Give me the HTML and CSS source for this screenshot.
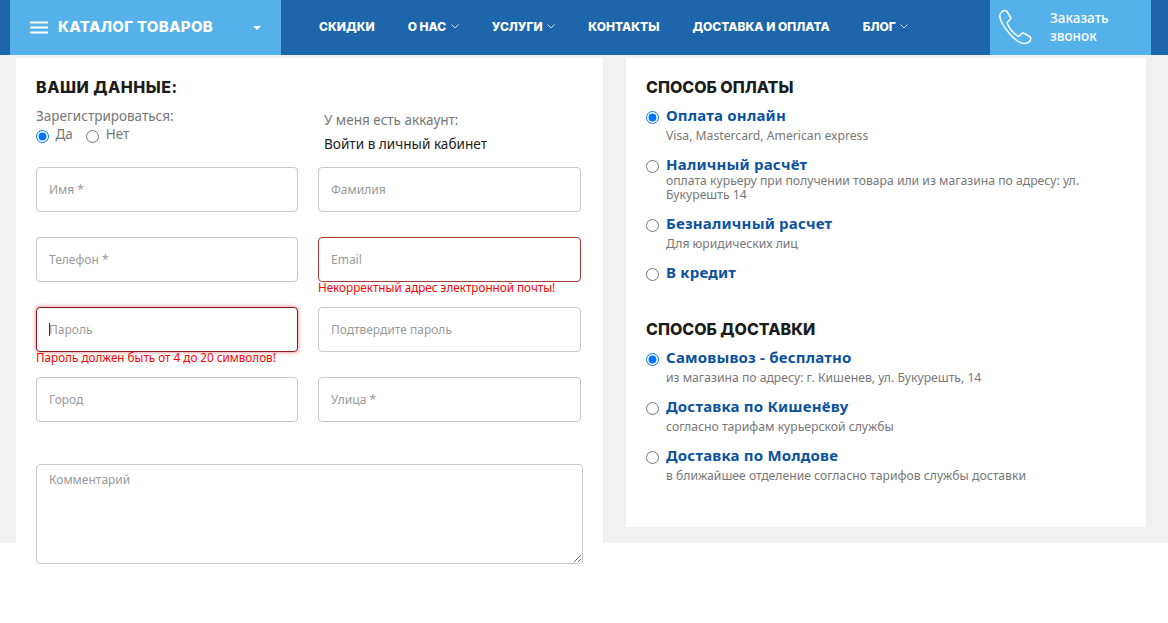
FILE: index.html
```html
<!DOCTYPE html>
<html lang="ru">
<head>
    <meta charset="UTF-8">
    <title>Оформление заказа</title>
    <link rel="stylesheet" href="styles.css">
</head>
<body>
    <div class="header">
        <div class="catalog">
            <svg class="burger" width="18" height="13" viewBox="0 0 18 13"><path d="M0 1.500h18M0 6.500h18M0 11.500h18" stroke="#fff" stroke-width="2"/></svg>
            <span class="catalog-title">Каталог товаров</span>
            <span class="catalog-caret"></span>
        </div>
        <div class="nav-links">
            <a href="#">Скидки</a>
            <a href="#">О нас <svg class="chevron" width="8" height="5" viewBox="0 0 8 5"><path d="M.5.500 4 4 7.500.500" fill="none" stroke="#c9dcee" stroke-width="1"/></svg></a>
            <a href="#">Услуги <svg class="chevron" width="8" height="5" viewBox="0 0 8 5"><path d="M.5.500 4 4 7.500.500" fill="none" stroke="#c9dcee" stroke-width="1"/></svg></a>
            <a href="#">Контакты</a>
            <a href="#">Доставка и оплата</a>
            <a href="#">Блог <svg class="chevron" width="8" height="5" viewBox="0 0 8 5"><path d="M.5.500 4 4 7.500.500" fill="none" stroke="#c9dcee" stroke-width="1"/></svg></a>
        </div>
        <a href="#" class="callback">
            <svg class="phone" width="34" height="35" viewBox="0 0 34 35"><path d="M2 5.500C3 3.500 5 1.500 7 1.500c1 0 1.700.5 2.300 1.500l3 5c.6 1 .4 2-.4 2.800L9.800 12.800c-.6.600-.7 1.300-.3 2.200 2.300 5 5.700 9 10 12 .8.500 1.500.4 2.100-.2l2-2c.9-.8 1.900-.9 2.900-.3l5 3c1 .6 1.500 1.400 1.300 2.400-.3 2-2.500 3.900-5 4.400-3.500.6-7.800-1.300-12.300-5.600C9.500 23 5 16.500 2.800 11.500 2 9 1.500 7 2 5.500Z" fill="none" stroke="#fff" stroke-width="1.500"/></svg>
            <span>Заказать<br>звонок</span>
        </a>
    </div>

    <div class="checkout">
        <div class="card card-form">
            <h2>Ваши данные:</h2>
            <div class="account-row">
                <div class="register">
                    <p class="muted">Зарегистрироваться:</p>
                    <label class="radio-inline"><input type="radio" name="register" checked> Да</label>
                    <label class="radio-inline"><input type="radio" name="register"> Нет</label>
                </div>
                <div class="login">
                    <p class="muted">У меня есть аккаунт:</p>
                    <a href="#">Войти в личный кабинет</a>
                </div>
            </div>
            <div class="form-grid">
                <div class="field"><input type="text" placeholder="Имя *"></div>
                <div class="field"><input type="text" placeholder="Фамилия"></div>
                <div class="field"><input type="text" placeholder="Телефон *"></div>
                <div class="field">
                    <input type="text" class="invalid" placeholder="Email">
                    <p class="error">Некорректный адрес электронной почты!</p>
                </div>
                <div class="field">
                    <input type="password" class="invalid focused" placeholder="Пароль">
                    <span class="caret"></span>
                    <p class="error">Пароль должен быть от 4 до 20 символов!</p>
                </div>
                <div class="field"><input type="password" placeholder="Подтвердите пароль"></div>
                <div class="field"><input type="text" placeholder="Город"></div>
                <div class="field"><input type="text" placeholder="Улица *"></div>
            </div>
            <textarea placeholder="Комментарий"></textarea>
        </div>

        <div class="card card-options">
            <h3>Способ оплаты</h3>
            <label class="option">
                <input type="radio" name="payment" checked>
                <span class="option-title">Оплата онлайн</span>
                <span class="option-text">Visa, Mastercard, American express</span>
            </label>
            <label class="option option-tight">
                <input type="radio" name="payment">
                <span class="option-title">Наличный расчёт</span>
                <span class="option-text">оплата курьеру при получении товара или из магазина по адресу: ул. Букурешть 14</span>
            </label>
            <label class="option">
                <input type="radio" name="payment">
                <span class="option-title">Безналичный расчет</span>
                <span class="option-text">Для юридических лиц</span>
            </label>
            <label class="option">
                <input type="radio" name="payment">
                <span class="option-title">В кредит</span>
            </label>

            <h3 class="delivery-title">Способ доставки</h3>
            <label class="option">
                <input type="radio" name="delivery" checked>
                <span class="option-title">Самовывоз - бесплатно</span>
                <span class="option-text">из магазина по адресу: г. Кишенев, ул. Букурешть, 14</span>
            </label>
            <label class="option">
                <input type="radio" name="delivery">
                <span class="option-title">Доставка по Кишенёву</span>
                <span class="option-text">согласно тарифам курьерской службы</span>
            </label>
            <label class="option">
                <input type="radio" name="delivery">
                <span class="option-title">Доставка по Молдове</span>
                <span class="option-text">в ближайшее отделение согласно тарифов службы доставки</span>
            </label>
        </div>
    </div>
</body>
</html>
```

FILE: styles.css
```css
body {
    font-family: "Noto Sans", "Open Sans", sans-serif;
    margin: 0;
    color: #777;
    background-color: #fff;
    font-size: 13px;
}

/* Header */
.header {
    display: flex;
    height: 55px;
    padding-left: 10px;
    background-color: #1e66ab;
}

.catalog {
    display: flex;
    align-items: center;
    flex-shrink: 0;
    width: 271px;
    padding-left: 20px;
    box-sizing: border-box;
    background-color: #54b1ea;
    color: #fff;
}

.burger {
    margin-right: 10px;
}

.catalog-title {
    margin-bottom: 2px;
    font-family: Inter, sans-serif;
    font-weight: 800;
    font-size: 15px;
    letter-spacing: 0.3px;
    text-transform: uppercase;
    white-space: nowrap;
}

.catalog-caret {
    margin-left: auto;
    margin-right: 20px;
    border-top: 4px solid #fff;
    border-left: 4.5px solid transparent;
    border-right: 4.5px solid transparent;
}

.nav-links {
    display: flex;
    align-items: center;
    gap: 33px;
    padding: 0 0 2px 38px;
    width: 709px;
    box-sizing: border-box;
}

.nav-links a {
    font-family: Inter, sans-serif;
    font-weight: 800;
    font-size: 12px;
    color: #fff;
    text-decoration: none;
    text-transform: uppercase;
    white-space: nowrap;
}

.chevron {
    margin-left: 2px;
    vertical-align: 2px;
}

.callback {
    display: flex;
    align-items: center;
    width: 161px;
    padding: 0 0 2px 8px;
    box-sizing: border-box;
    background-color: #54b1ea;
    color: #fff;
    text-decoration: none;
    font-weight: 500;
    font-size: 13.500px;
    line-height: 18px;
}

.callback span {
    margin-left: 18px;
}

/* Page body: the grey band stops at 488px, the form card runs past it */
.checkout {
    display: flex;
    align-items: flex-start;
    padding: 3px 0 0 16px;
    background: linear-gradient(#f1f1f1, #f1f1f1) no-repeat;
    background-size: 100% 488px;
}

.card {
    background-color: #fff;
    box-sizing: border-box;
}

.card-form {
    width: 587px;
    padding: 19px 20px 0;
}

.card-options {
    width: 520px;
    height: 469px;
    margin-left: 23px;
    padding: 19px 20px 0;
}

h2, h3 {
    margin: 0;
    font-family: Inter, sans-serif;
    font-weight: 800;
    font-size: 16px;
    line-height: 20px;
    color: #1c1c1c;
    text-transform: uppercase;
}

h2 {
    letter-spacing: 0.5px;
}

/* Account row */
.account-row {
    display: flex;
    height: 60px;
    padding-top: 10px;
}

.register {
    width: 288px;
}

.muted {
    margin: 0;
    font-size: 13.500px;
    line-height: 18px;
}

.radio-inline {
    margin-right: 10px;
    font-size: 13.500px;
}

.radio-inline input {
    margin: 3px 3px 0 0;
    vertical-align: -4px;
}

.login {
    padding-top: 4px;
}

.login a {
    display: block;
    margin-top: 6px;
    color: #222;
    font-size: 13.600px;
    line-height: 18px;
    text-decoration: none;
}

/* Form */
.form-grid {
    display: grid;
    grid-template-columns: 262px 263px;
    column-gap: 20px;
}

.field {
    position: relative;
    height: 70px;
}

.field input {
    display: block;
    width: 100%;
    height: 45px;
    padding: 0 12px;
    box-sizing: border-box;
    border: 1px solid #c8c8c8;
    border-radius: 4px;
    font-family: inherit;
    font-size: 12px;
    outline: none;
}

input::placeholder,
textarea::placeholder {
    color: #999;
}

.field input.invalid {
    border-color: #a53a3a;
}

.field input.focused {
    border-color: #8c1c1c;
    box-shadow: 0 0 4px rgba(200, 30, 30, 0.6);
}

.caret {
    position: absolute;
    top: 16px;
    left: 13px;
    width: 1px;
    height: 13px;
    background-color: #333;
}

.error {
    margin: -1px 0 0;
    color: #f00;
    font-size: 11.700px;
    line-height: 13px;
}

textarea {
    display: block;
    width: 547px;
    height: 100px;
    margin-top: 17px;
    padding: 6px 12px;
    box-sizing: border-box;
    border: 1px solid #c8c8c8;
    border-radius: 4px;
    font-family: inherit;
    font-size: 12px;
    outline: none;
}

/* Payment and delivery options */
.option {
    display: grid;
    grid-template-columns: 20px 1fr;
    margin-top: 11px;
}

h3 + .option {
    margin-top: 8px;
}

.option input {
    grid-row: 1;
    margin: 6px 0 0;
    width: 13px;
    height: 13px;
}

.option-title {
    grid-column: 2;
    font-size: 15px;
    font-weight: 700;
    line-height: 20px;
    letter-spacing: 0.2px;
    color: #0a52a0;
}

.option-text {
    grid-column: 2;
    font-size: 12.200px;
    line-height: 15px;
    margin-top: 3px;
}

.option-tight {
    padding-bottom: 0.5px;
}

.option-tight .option-title {
    padding-top: 1px;
    line-height: 18px;
}

.option-tight .option-text {
    margin-top: 0.5px;
    line-height: 14px;
}

.delivery-title {
    margin-top: 37px;
}
```
